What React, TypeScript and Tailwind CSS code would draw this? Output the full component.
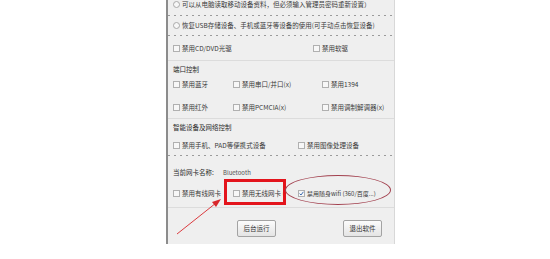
import React from "react";

const font = { fontFamily: '"Noto Sans CJK SC", "Noto Sans", sans-serif' };

function Box({ checked = false }: { checked?: boolean }) {
  return (
    <span className="relative mr-[2px] inline-block h-[7px] w-[7px] shrink-0 border border-[#b0b0b0] bg-[#f7f7f7]">
      {checked && (
        <svg className="absolute left-0 top-0" width="5" height="5" viewBox="0 0 5 5">
          <path d="M0.6 2.6 L2 4 L4.4 0.8" fill="none" stroke="#2a5ea8" strokeWidth="0.9" />
        </svg>
      )}
    </span>
  );
}

function Radio() {
  return <span className="mr-[2px] inline-block h-[7px] w-[7px] shrink-0 rounded-full border border-[#a9a9a9] bg-[#f7f7f7]" />;
}

function Item({ label, w, checked = false, tc }: { label: string; w?: string; checked?: boolean; tc?: string }) {
  return (
    <div className={`flex items-center whitespace-nowrap ${w ?? ""}`}>
      <Box checked={checked} />
      <span className={tc}>{label}</span>
    </div>
  );
}

function Dotted() {
  return <div className="h-px w-full bg-[linear-gradient(to_right,#9a9a9a_2px,transparent_2px)] bg-[length:6px_1px]" />;
}

function Solid() {
  return <div className="h-px w-full bg-[#dcdcdc]" />;
}

function Btn({ label }: { label: string }) {
  return (
    <div className="flex h-[17px] w-[39px] items-center justify-center rounded-[2px] border border-[#a3a3a3] bg-gradient-to-b from-[#fcfcfc] to-[#e4e4e4] text-[#333]">
      {label}
    </div>
  );
}

export default function App() {
  return (
    <div className="relative h-[259px] w-[550px] overflow-hidden bg-white" style={font}>
      <div className="ml-[166px] flex h-[244px] w-[229px] flex-col overflow-hidden border-l-2 border-r border-l-[#8c8c8c] border-r-[#d8d8d8] bg-[#efefef] text-[6.5px] leading-[9px] text-[#3a3a3a]">
        <div className="flex h-[15px] items-center pb-[6px] pl-[5px] whitespace-nowrap">
          <Radio />
          <span>可以从电脑读取移动设备资料，但必须输入管理员密码重新设置）</span>
        </div>
        <Dotted />
        <div className="flex h-[19px] items-center pl-[5px] whitespace-nowrap">
          <Radio />
          <span>恢复USB存储设备、手机或蓝牙等设备的使用(可手动点击恢复设备)</span>
        </div>
        <Dotted />
        <div className="flex h-[24px] items-center pl-[5px]">
          <Item label="禁用CD/DVD光驱" w="w-[140px]" />
          <Item label="禁用软驱" />
        </div>
        <Solid />
        <div className="flex h-[16px] items-center pl-[5px] text-[#2a2a2a]">端口控制</div>
        <div className="flex h-[15px] items-center pl-[5px]">
          <Item label="禁用蓝牙" w="w-[60px]" />
          <Item label="禁用串口/并口(x)" w="w-[89px]" />
          <Item label="禁用1394" />
        </div>
        <div className="flex h-[26px] items-center pl-[5px] pt-[4px]">
          <Item label="禁用红外" w="w-[60px]" />
          <Item label="禁用PCMCIA(x)" w="w-[89px]" />
          <Item label="禁用调制解调器(x)" />
        </div>
        <Solid />
        <div className="flex h-[16px] items-center pl-[5px] text-[#2a2a2a]">智能设备及网络控制</div>
        <div className="flex h-[20px] items-center pl-[5px]">
          <Item label="禁用手机、PAD等便携式设备" w="w-[125px]" />
          <Item label="禁用图像处理设备" />
        </div>
        <Dotted />
        <div className="flex h-[26px] items-center pl-[5px] pt-[6px]">
          <span className="w-[50px] text-[#2a2a2a]">当前网卡名称:</span>
          <span className="text-[6px] text-[#555]">Bluetooth</span>
        </div>
        <div className="flex h-[22px] items-center pl-[5px]">
          <Item label="禁用有线网卡" w="w-[60px]" />
          <Item label="禁用无线网卡 (" w="w-[65px] overflow-hidden" />
          <Item label="禁用随身wifi (360/百度...)" checked tc="text-[6px]" />
        </div>
        <div className="h-[3px]" />
        <Solid />
        <div className="flex pl-[69px] pt-[12px]">
          <Btn label="后台运行" />
          <div className="w-[67px]" />
          <Btn label="退出软件" />
        </div>
      </div>

      {/* annotations */}
      <div className="absolute left-[224px] top-[179px] h-[26px] w-[62px] border-[3px] border-[#e3141c]" />
      <div className="absolute left-[285px] top-[175px] h-[30px] w-[106px] rounded-[50%] border border-[#a2404e]" />
      <svg className="absolute left-0 top-0" width="550" height="259" viewBox="0 0 550 259">
        <line x1="177" y1="234" x2="216" y2="203" stroke="#d8262a" strokeWidth="0.9" />
        <polygon points="221,199 212,202 216,207" fill="#d8262a" />
      </svg>
    </div>
  );
}
